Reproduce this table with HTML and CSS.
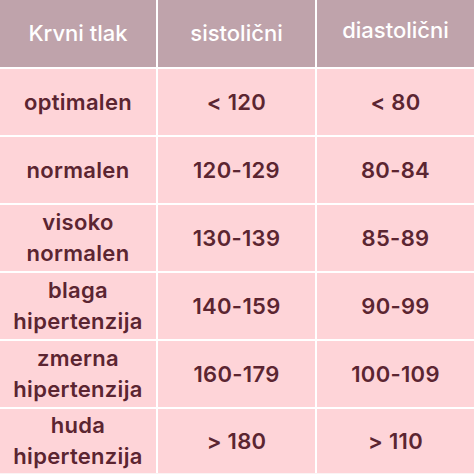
FILE: index.html
```html
<!DOCTYPE html>
<html lang="sl">
<head>
<meta charset="utf-8">
<link rel="stylesheet" href="styles.css">
</head>
<body>
<div class="table">
  <div class="cell head">Krvni tlak</div>
  <div class="cell head">sistolični</div>
  <div class="cell head up">diastolični</div>

  <div class="cell">optimalen</div>
  <div class="cell">&lt; 120</div>
  <div class="cell">&lt; 80</div>

  <div class="cell">normalen</div>
  <div class="cell">120-129</div>
  <div class="cell">80-84</div>

  <div class="cell">visoko<br>normalen</div>
  <div class="cell">130-139</div>
  <div class="cell">85-89</div>

  <div class="cell">blaga<br>hipertenzija</div>
  <div class="cell">140-159</div>
  <div class="cell">90-99</div>

  <div class="cell">zmerna<br>hipertenzija</div>
  <div class="cell">160-179</div>
  <div class="cell">100-109</div>

  <div class="cell">huda<br>hipertenzija</div>
  <div class="cell">&gt; 180</div>
  <div class="cell">&gt; 110</div>
</div>
</body>
</html>
```

FILE: styles.css
```css
html, body {
  margin: 0;
  padding: 0;
  background: #fbf3f4;
}
.table {
  width: 474px;
  display: grid;
  grid-template-columns: 156px 157px 1fr;
  grid-template-rows: 67px 66px 66px 66px 66px 66px 64px;
  gap: 2px;
  background: #ffffff;
  font-family: "Inter", "Open Sans", sans-serif;
}
.cell {
  background: #fed4d8;
  color: #5b2531;
  font-weight: 600;
  font-size: 22px;
  letter-spacing: 0.3px;
  line-height: 31px;
  text-align: center;
  display: flex;
  align-items: center;
  justify-content: center;
}
.head {
  background: #bfa3ab;
  color: #ffffff;
  font-weight: 500;
  font-size: 22px;
  letter-spacing: 0;
}
.up {
  padding-bottom: 6px;
}
```
